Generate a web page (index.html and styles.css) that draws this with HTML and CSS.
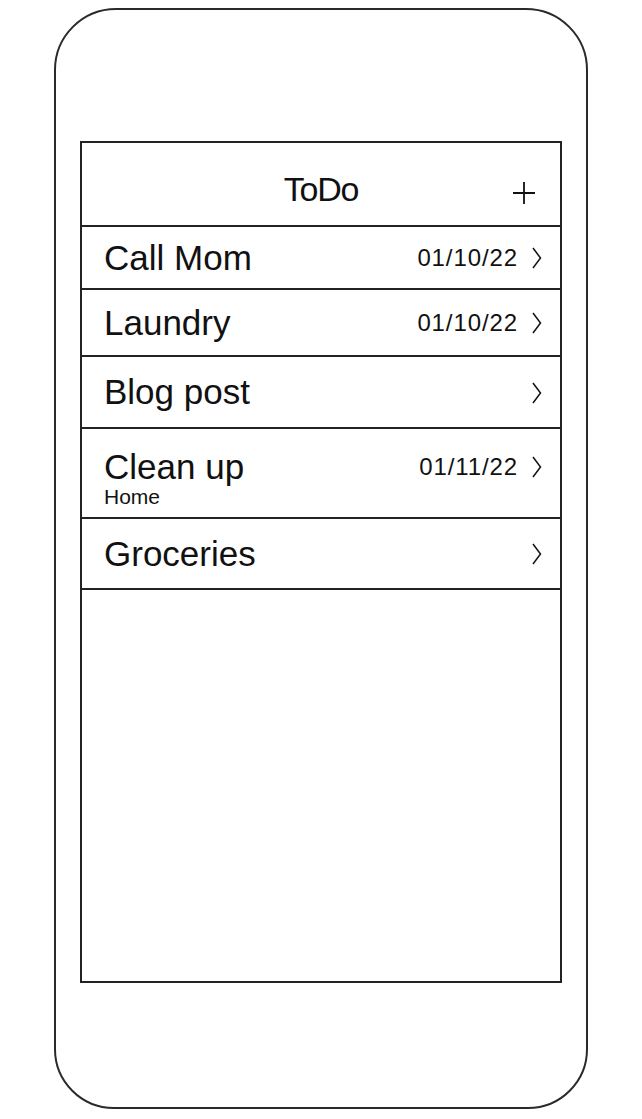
FILE: index.html
```html
<!DOCTYPE html>
<html lang="en">
<head>
<meta charset="utf-8">
<title>ToDo</title>
<link rel="stylesheet" href="styles.css">
</head>
<body>
<div class="phone">
  <div class="screen">
    <header class="header">
      <span></span>
      <h1 class="title">ToDo</h1>
      <span class="add">
        <svg width="22" height="22" viewBox="0 0 22 22"><path d="M11 0V22M0 11H22" stroke="#111" stroke-width="1.8" fill="none"/></svg>
      </span>
    </header>
    <ul class="list">
      <li class="row h63">
        <div class="line"><span class="name">Call Mom</span><span class="meta"><span class="date">01/10/22</span><svg class="chev" width="10" height="22" viewBox="0 0 10 22"><polyline points="1,1 8.5,11 1,21" fill="none" stroke="#111" stroke-width="1.5"/></svg></span></div>
      </li>
      <li class="row h67">
        <div class="line"><span class="name">Laundry</span><span class="meta"><span class="date">01/10/22</span><svg class="chev" width="10" height="22" viewBox="0 0 10 22"><polyline points="1,1 8.5,11 1,21" fill="none" stroke="#111" stroke-width="1.5"/></svg></span></div>
      </li>
      <li class="row h72">
        <div class="line"><span class="name">Blog post</span><span class="meta"><svg class="chev" width="10" height="22" viewBox="0 0 10 22"><polyline points="1,1 8.5,11 1,21" fill="none" stroke="#111" stroke-width="1.5"/></svg></span></div>
      </li>
      <li class="row h90">
        <div class="line"><span class="name">Clean up</span><span class="meta"><span class="date">01/11/22</span><svg class="chev" width="10" height="22" viewBox="0 0 10 22"><polyline points="1,1 8.5,11 1,21" fill="none" stroke="#111" stroke-width="1.5"/></svg></span></div>
        <div class="sub">Home</div>
      </li>
      <li class="row h71">
        <div class="line"><span class="name">Groceries</span><span class="meta"><svg class="chev" width="10" height="22" viewBox="0 0 10 22"><polyline points="1,1 8.5,11 1,21" fill="none" stroke="#111" stroke-width="1.5"/></svg></span></div>
      </li>
    </ul>
  </div>
</div>
</body>
</html>
```
FILE: styles.css
```css
* { box-sizing: border-box; }
html, body { margin: 0; padding: 0; background: #fff; }
body {
  font-family: "Liberation Sans", Arial, sans-serif;
  color: #111;
}
.phone {
  margin: 8px 0 0 54px;
  width: 534px;
  height: 1101px;
  border: 2px solid #2a2a2a;
  border-radius: 62px 62px 60px 60px;
  padding: 131px 24px 0;
}
.screen {
  width: 482px;
  height: 842px;
  border: 2px solid #222;
  display: flex;
  flex-direction: column;
}
.header {
  height: 84px;
  border-bottom: 2px solid #222;
  display: grid;
  grid-template-columns: 1fr auto 1fr;
  align-items: center;
  padding: 10px 25px 0;
}
.title {
  margin: 0;
  font-weight: normal;
  font-size: 34px;
  letter-spacing: -1.2px;
  line-height: 40px;
}
.add {
  justify-self: end;
  display: flex;
  margin-top: 7px;
}
.list {
  list-style: none;
  margin: 0;
  padding: 0;
}
.row {
  border-bottom: 2px solid #222;
  display: flex;
  flex-direction: column;
  justify-content: center;
  padding: 0 18px 0 22px;
}
.h63 { height: 63px; }
.h67 { height: 67px; }
.h72 { height: 72px; }
.h90 { height: 90px; padding-top: 7px; }
.h71 { height: 71px; }
.line {
  display: flex;
  align-items: center;
  justify-content: space-between;
  height: 40px;
}
.name {
  font-size: 35px;
  line-height: 40px;
}
.meta {
  display: flex;
  align-items: center;
  gap: 14px;
  margin-top: 1px;
}
.date {
  font-size: 24px;
  letter-spacing: 0.9px;
  line-height: 28px;
}
.chev { display: block; }
.sub {
  font-size: 21px;
  line-height: 20px;
}
```
